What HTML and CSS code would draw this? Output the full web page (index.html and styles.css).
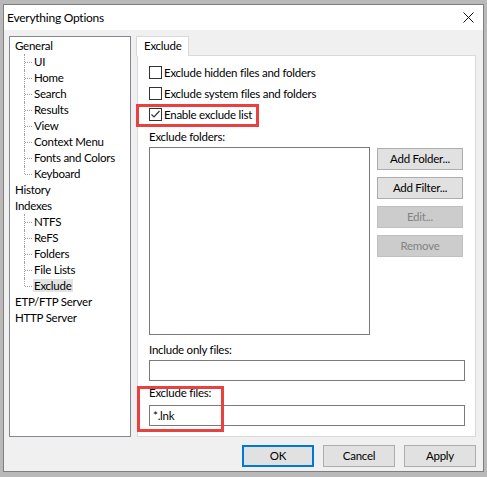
FILE: index.html
```html
<!DOCTYPE html>
<html lang="en">
<head>
  <meta charset="UTF-8" />
  <title>Everything Options</title>
  <link rel="stylesheet" href="styles.css">
</head>
<body>
  <div class="screen">
    <div class="window">
      <div class="titlebar">
        <span class="title">Everything Options</span>
        <svg class="close" width="11" height="11" viewBox="0 0 11 11">
          <path d="M0.5 0.5 L10.5 10.5 M10.5 0.5 L0.5 10.5" stroke="#111" stroke-width="1" fill="none"/>
        </svg>
      </div>

      <div class="client">
        <div class="main">
          <ul class="tree">
            <li class="node">General</li>
            <li>
              <ul class="branch">
                <li class="child">UI</li>
                <li class="child">Home</li>
                <li class="child">Search</li>
                <li class="child">Results</li>
                <li class="child">View</li>
                <li class="child">Context Menu</li>
                <li class="child">Fonts and Colors</li>
                <li class="child">Keyboard</li>
              </ul>
            </li>
            <li class="node">History</li>
            <li class="node">Indexes</li>
            <li>
              <ul class="branch">
                <li class="child">NTFS</li>
                <li class="child">ReFS</li>
                <li class="child">Folders</li>
                <li class="child">File Lists</li>
                <li class="child"><span class="selected">Exclude</span></li>
              </ul>
            </li>
            <li class="node">ETP/FTP Server</li>
            <li class="node">HTTP Server</li>
          </ul>

          <div class="tabs">
            <div class="tab-strip">
              <div class="tab">Exclude</div>
            </div>
            <div class="tab-panel">
              <div class="check-row">
                <span class="checkbox"></span>
                <span>Exclude hidden files and folders</span>
              </div>
              <div class="check-row">
                <span class="checkbox"></span>
                <span>Exclude system files and folders</span>
              </div>
              <div class="check-row">
                <span class="checkbox">
                  <svg width="11" height="11" viewBox="0 0 11 11">
                    <path d="M1.5 5.5 L4 8 L9.5 2" stroke="#333" stroke-width="1.2" fill="none"/>
                  </svg>
                </span>
                <span>Enable exclude list</span>
                <span class="mark mark-list"></span>
              </div>

              <div class="field-label">Exclude folders:</div>
              <div class="folders">
                <div class="listbox"></div>
                <div class="side-buttons">
                  <button class="btn">Add Folder...</button>
                  <button class="btn">Add Filter...</button>
                  <button class="btn" disabled>Edit...</button>
                  <button class="btn" disabled>Remove</button>
                </div>
              </div>

              <div class="field-label spaced">Include only files:</div>
              <div class="textbox"></div>

              <div class="exclude-files">
                <div class="field-label">Exclude files:</div>
                <div class="textbox">*.lnk</div>
                <span class="mark mark-files"></span>
              </div>
            </div>
          </div>
        </div>

        <div class="footer">
          <button class="btn btn-dialog btn-default">OK</button>
          <button class="btn btn-dialog">Cancel</button>
          <button class="btn btn-dialog">Apply</button>
        </div>
      </div>
    </div>
  </div>
</body>
</html>
```

FILE: styles.css
```css
:root {
  --desk: #b9b9b9;
  --frame: #7f7f7f;
  --face: #f0f0f0;
  --panel-line: #d9d9d9;
  --field-line: #7a7a7a;
  --btn-bg: #e1e1e1;
  --btn-line: #adadad;
  --accent: #0078d7;
  --mark: #e8413f;
}
* { box-sizing: border-box; margin: 0; padding: 0; }
body {
  background: var(--desk); color: #000;
  font-family: 'Lato', 'Liberation Sans', sans-serif; font-size: 11.5px;
  letter-spacing: -0.25px; line-height: 16px;
}
.screen {
  width: 487px; height: 477px; padding: 4px 0 0 3px;
}
.window {
  width: 481px; height: 468px; border: 1px solid var(--frame);
  background: var(--face); display: flex; flex-direction: column;
}
.titlebar {
  height: 25px; background: #fff; display: flex; align-items: center;
  padding-left: 3px;
}
.title { font-size: 12px; }
.close { margin-left: auto; margin-right: 9px; }
.client {
  flex: 1; padding: 6px 7px 0 5px; display: flex; flex-direction: column;
}
.main {
  display: flex; gap: 6px; height: 401px;
}

/* tree */
.tree {
  list-style: none; width: 122px; height: 401px;
  background: #fff; border: 1px solid #828790; padding: 1px 0 0 5px;
}
.branch { list-style: none; }
.tree li { height: 16px; white-space: nowrap; }
.tree li:has(.branch) { height: auto; }
.child { position: relative; padding-left: 19px; }
.child::before {
  content: ''; position: absolute; left: 9px; top: 0; bottom: 0;
  border-left: 1px dotted #a0a0a0;
}
.child:last-child::before { bottom: 8px; }
.child::after {
  content: ''; position: absolute; left: 10px; top: 8px; width: 7px;
  border-top: 1px dotted #a0a0a0;
}
.selected { background: #e3e3e3; padding: 0 1px; margin-left: -1px; }

/* tabs */
.tabs { width: 339px; display: flex; flex-direction: column; }
.tab-strip { height: 19px; display: flex; }
.tab {
  position: relative; z-index: 1; margin-left: -1px;
  height: 20px; width: 53px; background: #fff;
  border: 1px solid var(--panel-line); border-bottom: none;
  padding: 1px 0 0 7px;
}
.tab-panel {
  flex: 1; background: #fff; border: 1px solid var(--panel-line);
  padding: 6px 10px 0 11px;
}
.check-row {
  position: relative; height: 21px; display: flex; align-items: center; gap: 2px;
}
.checkbox {
  width: 13px; height: 13px; border: 1px solid #333; background: #fff;
  display: flex; align-items: center; justify-content: center; margin-top: -1px;
}
.mark {
  position: absolute; border: 3px solid var(--mark); pointer-events: none;
}
.mark-list { left: -13px; top: 0; width: 123px; height: 23px; }
.field-label { height: 18px; margin-top: 3px; line-height: 18px; }
.folders { display: flex; gap: 7px; margin-top: 1px; }
.listbox {
  width: 221px; height: 188px; border: 1px solid var(--field-line); background: #fff;
}
.side-buttons {
  display: flex; flex-direction: column; gap: 7px; padding-top: 1px;
}
.btn {
  font: inherit; letter-spacing: inherit; color: #000; background: var(--btn-bg);
  border: 1px solid var(--btn-line); height: 22px; width: 86px;
}
.btn:disabled {
  background: #cccccc; border-color: #bfbfbf; color: #838383;
}
.spaced { margin-top: 6px; }
.textbox {
  height: 21px; margin-top: 1px; border: 1px solid var(--field-line);
  background: #fff; padding: 1px 0 0 3px; line-height: 18px;
}
.exclude-files { position: relative; }
.exclude-files .textbox { margin-top: 3px; }
.mark-files { left: -12px; top: 2px; width: 87px; height: 46px; }

/* footer */
.footer {
  display: flex; justify-content: flex-end; gap: 9px; margin-top: 8px;
}
.btn-dialog { width: 72px; }
.btn-default { border: 2px solid var(--accent); }
```
